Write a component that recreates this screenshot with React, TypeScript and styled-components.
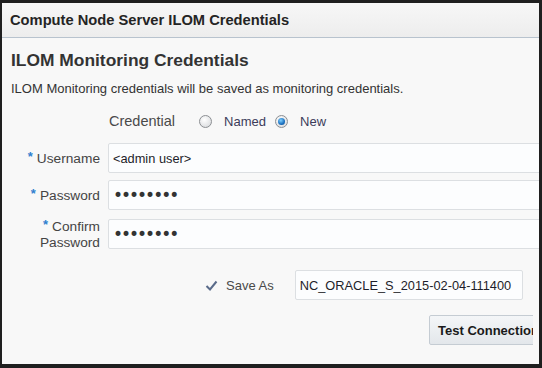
import React from "react";
import styled, { createGlobalStyle } from "styled-components";

const GlobalStyle = createGlobalStyle`
  html, body {
    margin: 0;
    padding: 0;
    background: #1f1f1f;
  }
  * {
    box-sizing: border-box;
  }
`;

const Frame = styled.div`
  width: 542px;
  height: 368px;
  display: flex;
  padding: 3px 3px 4px 2px;
  background: #1f1f1f;
  font-family: "Liberation Sans", Arial, sans-serif;
`;

const Dialog = styled.div`
  flex: 1;
  min-width: 0;
  display: flex;
  flex-direction: column;
  background: #f8f8f8;
  overflow: hidden;
`;

const Header = styled.div`
  height: 35px;
  flex-shrink: 0;
  display: flex;
  align-items: center;
  padding-left: 8px;
  background: linear-gradient(#f7f7f7, #ededed);
  border-bottom: 1px solid #b8c3ce;
  font-size: 14.7px;
  font-weight: bold;
  color: #242424;
`;

const Body = styled.div`
  padding: 12px 0 0 9px;
`;

const Title = styled.h2`
  margin: 0;
  font-size: 17.4px;
  line-height: 21px;
  font-weight: bold;
  color: #333;
`;

const Desc = styled.p`
  margin: 9px 0 0;
  font-size: 13px;
  line-height: 17px;
  color: #333;
`;

const CredRow = styled.div`
  margin-top: 14px;
  height: 20px;
  display: flex;
  align-items: center;
  padding-left: 98px;
  font-size: 13px;
  color: #4a4a4a;
`;

const CredLabel = styled.span`
  font-size: 14.5px;
  margin-right: 24px;
`;

const Radio = styled.span<{ $checked?: boolean }>`
  width: 13px;
  height: 13px;
  border-radius: 50%;
  border: 1px solid #8c8f93;
  background: radial-gradient(circle at 40% 35%, #ffffff, #d3d5d8);
  display: flex;
  align-items: center;
  justify-content: center;
  margin-right: 12px;
  &::after {
    content: "";
    display: ${(p) => (p.$checked ? "block" : "none")};
    width: 7px;
    height: 7px;
    border-radius: 50%;
    background: radial-gradient(circle at 40% 35%, #7fd0ff, #1a6fbf 60%, #0d4a8a);
  }
`;

const Option = styled.span`
  color: #3c3c5a;
  margin-right: 9px;
`;

const Form = styled.div`
  margin-top: 12px;
  display: grid;
  grid-template-columns: 89px 440px;
  column-gap: 8px;
  row-gap: 7px;
  align-items: center;
`;

const Label = styled.label`
  text-align: right;
  font-size: 13.7px;
  line-height: 16px;
  color: #444;
  white-space: nowrap;
`;

const Req = styled.span`
  color: #2f7fcf;
  font-weight: bold;
  font-size: 13px;
  margin-right: 4px;
  vertical-align: 2px;
`;

const Input = styled.input<{ $w?: number }>`
  width: ${(p) => (p.$w ? `${p.$w}px` : "100%")};
  height: 30px;
  border: 1px solid #dcdfe2;
  border-radius: 2px;
  background: #fcfdfe;
  padding: 0 4px;
  font-family: "Liberation Sans", Arial, sans-serif;
  font-size: 12.8px;
  color: #1e1e2a;
  outline: none;
`;

const Secret = styled(Input)`
  font-family: "DejaVu Sans", sans-serif;
  font-size: 17px;
  letter-spacing: -2px;
  color: #333;
`;

const SaveRow = styled.div`
  margin-top: 19px;
  display: flex;
  align-items: center;
  padding-left: 194px;
  font-size: 13px;
  color: #4a4a4a;
`;

const Check = styled.svg`
  width: 13px;
  height: 11px;
  margin-right: 8px;
`;

const SaveLabel = styled.span`
  margin-right: 21px;
`;

const ButtonRow = styled.div`
  margin-top: 15px;
  padding-left: 418px;
`;

const ButtonClip = styled.div`
  width: 104px;
  height: 30px;
  overflow: hidden;
`;

const Button = styled.button`
  width: 130px;
  height: 30px;
  padding: 0 0 0 8px;
  text-align: left;
  white-space: nowrap;
  border: 1px solid #c5ccd3;
  border-radius: 2px;
  background: linear-gradient(#f4f6f8, #e3e7eb);
  font-family: "Liberation Sans", Arial, sans-serif;
  font-size: 13px;
  font-weight: bold;
  color: #1a1a1a;
`;

export default function App() {
  return (
    <>
      <GlobalStyle />
      <Frame>
        <Dialog>
          <Header>Compute Node Server ILOM Credentials</Header>
          <Body>
            <Title>ILOM Monitoring Credentials</Title>
            <Desc>ILOM Monitoring credentials will be saved as monitoring credentials.</Desc>
            <CredRow>
              <CredLabel>Credential</CredLabel>
              <Radio />
              <Option>Named</Option>
              <Radio $checked />
              <Option>New</Option>
            </CredRow>
            <Form>
              <Label>
                <Req>*</Req>Username
              </Label>
              <Input defaultValue="<admin user>" />
              <Label>
                <Req>*</Req>Password
              </Label>
              <Secret type="password" defaultValue="password" />
              <Label>
                <Req>*</Req>Confirm
                <br />
                Password
              </Label>
              <Secret type="password" defaultValue="password" />
            </Form>
            <SaveRow>
              <Check viewBox="0 0 13 11">
                <path d="M1.5 6 L5 9.5 L11.5 1.5" fill="none" stroke="#5a6b8a" strokeWidth="2" />
              </Check>
              <SaveLabel>Save As</SaveLabel>
              <Input $w={228} defaultValue="NC_ORACLE_S_2015-02-04-111400" />
            </SaveRow>
            <ButtonRow>
              <ButtonClip>
                <Button>Test Connection</Button>
              </ButtonClip>
            </ButtonRow>
          </Body>
        </Dialog>
      </Frame>
    </>
  );
}
